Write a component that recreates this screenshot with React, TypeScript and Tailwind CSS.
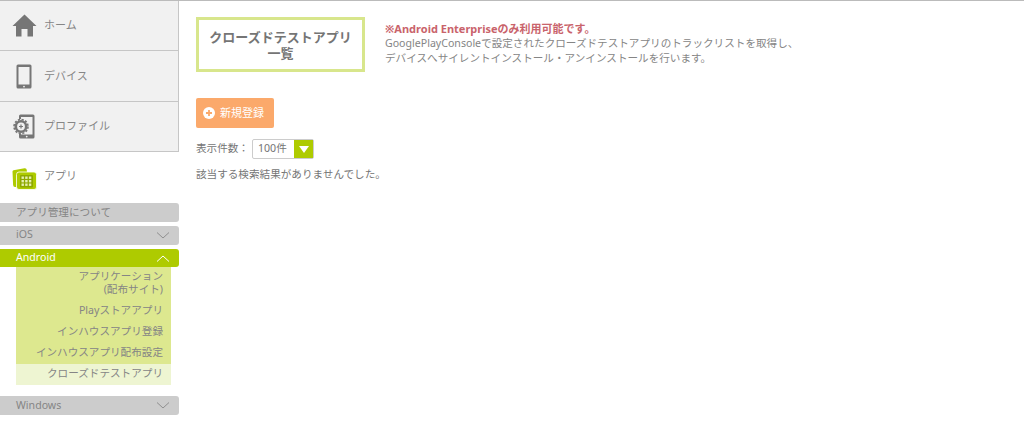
const font = { fontFamily: '"Noto Sans", "Noto Sans CJK JP", sans-serif' };

function HomeIcon() {
  return (
    <svg width="25" height="23" viewBox="0 0 25 23" fill="#767676">
      <path d="M12.5 0.5 L24.5 12 L21 12 L21 22.5 L15.5 22.5 L15.5 15 L9.5 15 L9.5 22.5 L4 22.5 L4 12 L0.5 12 Z" />
    </svg>
  );
}

function DeviceIcon() {
  return (
    <svg width="16" height="25" viewBox="0 0 16 25">
      <rect x="0.5" y="0.5" width="15" height="24" rx="1.5" fill="#767676" />
      <rect x="2.5" y="3" width="11" height="17.5" fill="#f1f1f1" />
      <circle cx="8" cy="22.6" r="0.9" fill="#f1f1f1" />
    </svg>
  );
}

function ProfileIcon() {
  return (
    <svg width="22" height="25" viewBox="0 0 22 25">
      <rect x="6" y="0.5" width="15.5" height="24" rx="1.5" fill="#767676" />
      <rect x="8" y="3" width="11.5" height="17.5" fill="#f1f1f1" />
      <circle cx="13.7" cy="22.6" r="0.9" fill="#f1f1f1" />
      <circle cx="8" cy="12.5" r="7.6" fill="#f1f1f1" />
      <circle cx="8" cy="12.5" r="5.2" fill="none" stroke="#767676" strokeWidth="2.6" />
      <circle cx="8" cy="12.5" r="7" fill="none" stroke="#767676" strokeWidth="1.6" strokeDasharray="2.2 1.5" />
      <path d="M6 12.5h4M8 10.5v4" stroke="#767676" strokeWidth="1.2" />
    </svg>
  );
}

function AppIcon() {
  return (
    <svg width="25" height="22" viewBox="0 0 25 22">
      <path d="M0.5 3.5 Q0.5 2.5 1.5 2.3 L12.5 0.3 Q14.5 0 14.8 2 L15 5 L6 7 L6 19 L3 19 Q1.2 19 1.1 17 Z" fill="#aecb00" />
      <rect x="4.5" y="4" width="20" height="17.5" rx="2.5" fill="#aecb00" stroke="#fff" strokeWidth="0.8" />
      <rect x="8" y="7" width="13" height="12.5" rx="1" fill="#8ea800" />
      <g fill="#e6f0b0">
        <rect x="9.5" y="8.5" width="2.4" height="2.4" />
        <rect x="13.2" y="8.5" width="2.4" height="2.4" />
        <rect x="16.9" y="8.5" width="2.4" height="2.4" />
        <rect x="9.5" y="12" width="2.4" height="2.4" />
        <rect x="13.2" y="12" width="2.4" height="2.4" />
        <rect x="16.9" y="12" width="2.4" height="2.4" />
        <rect x="9.5" y="15.5" width="2.4" height="2.4" />
        <rect x="13.2" y="15.5" width="2.4" height="2.4" />
        <rect x="16.9" y="15.5" width="2.4" height="2.4" />
      </g>
    </svg>
  );
}

function Chevron({ up, color }: { up?: boolean; color: string }) {
  return (
    <svg width="14" height="7" viewBox="0 0 14 7" fill="none" stroke={color} strokeWidth="1">
      <path d={up ? "M1 6.5 L7 1 L13 6.5" : "M1 0.5 L7 6 L13 0.5"} />
    </svg>
  );
}

function NavItem({ icon, label, height }: { icon: React.ReactNode; label: string; height: string }) {
  return (
    <div className={`flex items-center border-r border-b border-[#c6c6c6] bg-[#f1f1f1] ${height}`}>
      <div className="flex w-[44px] justify-center pl-[4px]">{icon}</div>
      <span className="text-[11px] text-[#868686]">{label}</span>
    </div>
  );
}

function Section({ label, open, plain, raised }: { label: string; open?: boolean; plain?: boolean; raised?: boolean }) {
  return (
    <div
      className={`flex items-center justify-between rounded-r-[3px] pr-[9px] pl-[16px] text-[10.6px] ${
        open ? "h-[18px] bg-[#aecb00] text-white" : "h-[19px] bg-[#cccccc] text-[#858585]"
      } ${raised ? "pb-[1px]" : ""}`}
    >
      <span>{label}</span>
      {!plain && <Chevron up={open} color={open ? "#ffffff" : "#8f8f8f"} />}
    </div>
  );
}

function SubItem({ children, active }: { children: React.ReactNode; active?: boolean }) {
  return (
    <div className={`px-2 pt-[3px] pb-[5px] text-right text-[10.6px] leading-[13px] text-[#858585] ${active ? "bg-[#eef5d2]" : ""}`}>
      {children}
    </div>
  );
}

export default function App() {
  return (
    <div className="flex h-[421px] w-[1024px] overflow-hidden border-t border-[#bbbbbb] bg-white" style={font}>
      <aside className="w-[179px] shrink-0">
        <NavItem icon={<HomeIcon />} label="ホーム" height="h-[50px]" />
        <NavItem icon={<DeviceIcon />} label="デバイス" height="h-[51px]" />
        <NavItem icon={<ProfileIcon />} label="プロファイル" height="h-[50px]" />
        <div className="flex h-[51px] items-center">
          <div className="flex w-[44px] justify-center pt-[3px] pl-[5px]">
            <AppIcon />
          </div>
          <span className="pb-[3px] text-[11px] text-[#868686]">アプリ</span>
        </div>
        <div className="flex flex-col gap-[4px]">
          <Section label="アプリ管理について" plain />
          <Section label="iOS" raised />
          <div>
            <Section label="Android" open />
            <div className="mr-[8px] ml-[16px] bg-[#dde88f]">
              <SubItem>
                アプリケーション
                <br />
                (配布サイト)
              </SubItem>
              <SubItem>Playストアアプリ</SubItem>
              <SubItem>インハウスアプリ登録</SubItem>
              <SubItem>インハウスアプリ配布設定</SubItem>
              <SubItem active>クローズドテストアプリ</SubItem>
            </div>
          </div>
          <div className="pt-[7px]">
            <Section label="Windows" />
          </div>
        </div>
      </aside>

      <main className="flex-1 pt-[16px] pl-[17px]">
        <div className="flex">
          <div className="flex h-[55px] w-[169px] items-center justify-center border-[3px] border-[#d8e68c] px-2 text-center text-[13px] leading-[16px] font-bold text-[#757575]">
            クローズドテストアプリ一覧
          </div>
          <div className="pt-[4px] pl-[20px] text-[10.6px] leading-[15px] text-[#858585]">
            <p className="text-[11px] font-bold text-[#c9636b]">※Android Enterpriseのみ利用可能です。</p>
            <p>GooglePlayConsoleで設定されたクローズドテストアプリのトラックリストを取得し、</p>
            <p>デバイスへサイレントインストール・アンインストールを行います。</p>
          </div>
        </div>

        <div className="mt-[26px] flex h-[30px] w-[78px] items-center gap-[5px] rounded-[2px] bg-[#fba96b] pl-[7px] text-[11px] text-white">
          <svg width="12" height="12" viewBox="0 0 12 12">
            <circle cx="6" cy="6" r="6" fill="#fff" />
            <path d="M6 3v6M3 6h6" stroke="#fba96b" strokeWidth="1.8" />
          </svg>
          新規登録
        </div>

        <div className="mt-[11px] flex items-center text-[10.6px] text-[#757575]">
          <span className="w-[56px]">表示件数：</span>
          <div className="flex h-[20px] w-[62px] items-center justify-between rounded-[2px] border border-[#cccccc]">
            <span className="pl-[5px]">100件</span>
            <div className="flex h-[18px] w-[19px] items-center justify-center bg-[#aecb00]">
              <svg width="10" height="7" viewBox="0 0 10 7">
                <path d="M0 0H10L5 7Z" fill="#fff" />
              </svg>
            </div>
          </div>
        </div>

        <p className="mt-[8px] text-[10.6px] leading-[14px] text-[#757575]">該当する検索結果がありませんでした。</p>
      </main>
    </div>
  );
}
